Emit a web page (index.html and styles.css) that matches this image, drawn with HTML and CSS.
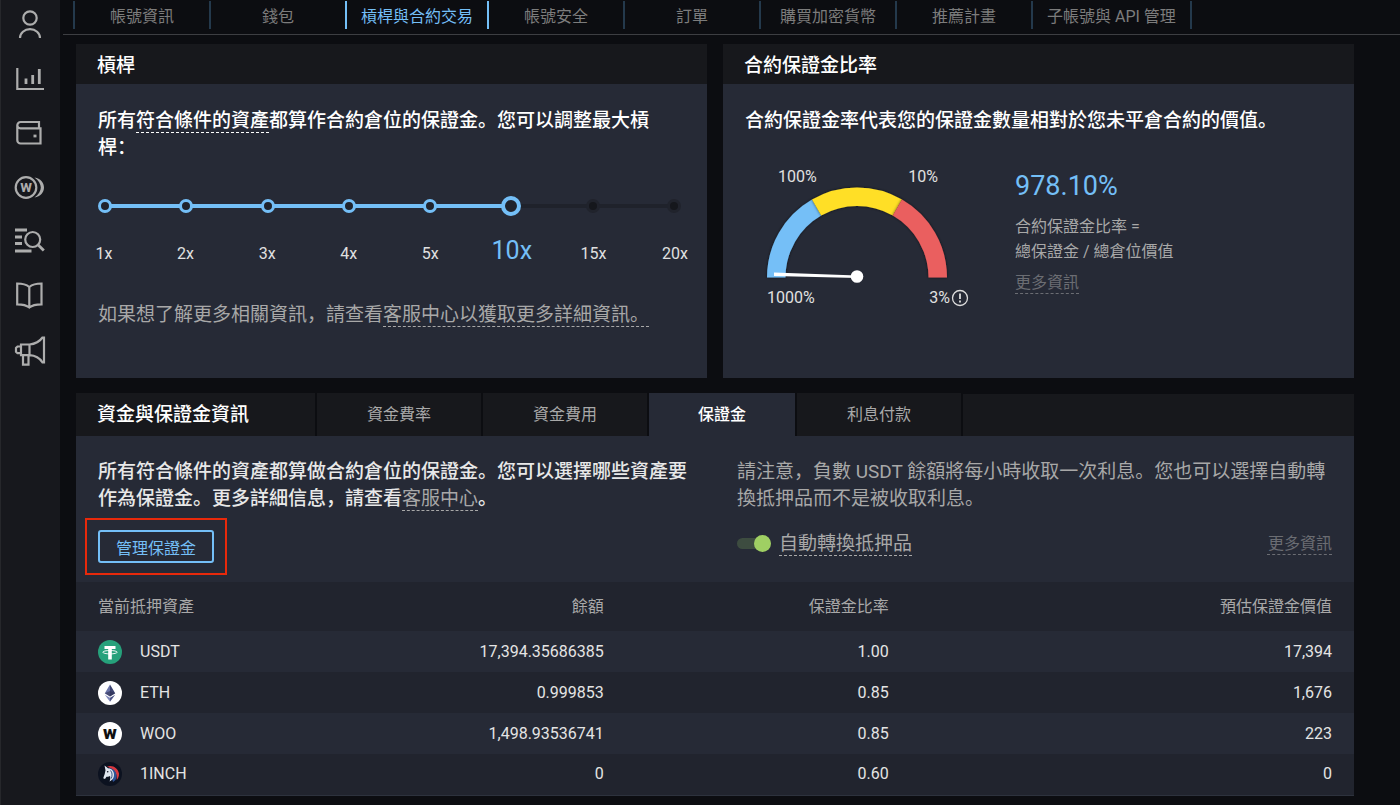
FILE: index.html
```html
<!DOCTYPE html>
<html lang="zh-CN">
<head>
    <meta charset="UTF-8">
    <meta name="viewport" content="width=device-width, initial-scale=1.0">
    <title>槓桿與合約交易</title>
    <link rel="stylesheet" href="styles.css">
</head>
<body>
    <div class="layout">
        <aside class="sidebar">
            <a href="#" aria-label="帳號">
                <svg viewBox="0 0 32 32"><circle cx="16" cy="9" r="6.7"/><path d="M6 29a9.8 8.6 0 0 1 20 0"/></svg>
            </a>
            <a href="#" aria-label="交易">
                <svg viewBox="0 0 32 32"><path d="M3.3 5v21H30"/><path class="thick" d="M12 15.500v5.500M18.700 12v9M25.300 6v15"/></svg>
            </a>
            <a href="#" aria-label="錢包">
                <svg viewBox="0 0 32 32"><path d="M3.300 8.300a3.300 3.300 0 0 1 3.300-3.300H25v6M3.300 8.300a3.200 3.200 0 0 0 3.300 3H26.500V26.500H6.600a3.300 3.300 0 0 1-3.300-3.300z"/><path class="thick" d="M19.500 19h3"/></svg>
            </a>
            <a href="#" aria-label="質押">
                <svg viewBox="0 0 32 32"><circle cx="12" cy="16.500" r="10.300"/><path d="M20.500 6.500C26.500 7.500 30 11.500 30 16.500s-3.500 9-9.500 10C24.500 23.500 26.800 20 26.800 16.500s-2.300-7-6.300-10z" class="moon"/><text x="12" y="21" text-anchor="middle">w</text></svg>
            </a>
            <a href="#" aria-label="紀錄">
                <svg viewBox="0 0 32 32"><path class="thick" d="M1 5h12M1 12h7M1 18.500h7M1 26h16.500"/><circle cx="18.700" cy="14.500" r="7.500"/><path class="thick" d="M24.200 20l5.600 5.600"/></svg>
            </a>
            <a href="#" aria-label="說明">
                <svg viewBox="0 0 32 32"><path d="M15.300 8C12 5.200 8 4.500 3.200 4.500V25.300c4.800 0 8.800.4 12.100 3.200 3.300-2.800 7.300-3.200 12.200-3.200V4.500C22.600 4.500 18.600 5.200 15.300 8zv20"/></svg>
            </a>
            <a href="#" aria-label="公告">
                <svg viewBox="0 0 32 32"><path d="M15.500 11.500C21 11 26 8 28.500 4.500H30v25h-1.500C26 25.500 21 22.500 15.500 22.200zM7 11.500h8.500v10.700H7zM7 13.500H3.500L2 15v3.700l1.500 1.500H7M9 22.200v9.500h5.500v-9.500"/></svg>
            </a>
        </aside>

        <main class="main">
            <nav class="top-nav">
                <a href="#">帳號資訊</a>
                <a href="#">錢包</a>
                <a href="#" class="active">槓桿與合約交易</a>
                <a href="#">帳號安全</a>
                <a href="#">訂單</a>
                <a href="#">購買加密貨幣</a>
                <a href="#">推薦計畫</a>
                <a href="#">子帳號與 API 管理</a>
            </nav>

            <div class="content">
                <div class="cards">
                    <section class="card">
                        <h2 class="card-title">槓桿</h2>
                        <div class="card-body">
                            <p class="lead">所有<a href="#">符合條件的資產</a>都算作合約倉位的保證金。您可以調整最大槓桿：</p>

                            <div class="leverage">
                                <div class="slider">
                                    <div class="track"><div class="track-fill"></div></div>
                                    <div class="stops">
                                        <span class="on"></span><span class="on"></span><span class="on"></span><span class="on"></span><span class="on"></span><span></span><span></span><span></span>
                                    </div>
                                    <input type="range" min="0" max="7" value="5" aria-label="槓桿">
                                </div>
                                <div class="slider-labels">
                                    <span>1x</span><span>2x</span><span>3x</span><span>4x</span><span>5x</span><span class="current">10x</span><span>15x</span><span>20x</span>
                                </div>
                            </div>

                            <p class="lead muted">如果想了解更多相關資訊，請查看<a href="#">客服中心以獲取更多詳細資訊。</a></p>
                        </div>
                    </section>

                    <section class="card">
                        <h2 class="card-title">合約保證金比率</h2>
                        <div class="card-body">
                            <p class="lead">合約保證金率代表您的保證金數量相對於您未平倉合約的價值。</p>

                            <div class="ratio">
                                <div class="gauge">
                                    <div class="gauge-top"><span>100%</span><span>10%</span></div>
                                    <svg viewBox="0 0 180 98">
                                        <defs>
                                            <filter id="soft" x="-20%" y="-20%" width="140%" height="140%">
                                                <feDropShadow dx="0" dy="0" stdDeviation="1.500" flood-color="#000" flood-opacity="0.6"/>
                                            </filter>
                                        </defs>
                                        <path filter="url(#soft)" fill="#74bff7" d="M0 90.500A90 90 0 0 1 45 12.560L54.250 28.580A71.500 71.500 0 0 0 18.500 90.500z"/>
                                        <path filter="url(#soft)" fill="#ffdf26" d="M45 12.560A90 90 0 0 1 135 12.560L125.750 28.580A71.500 71.500 0 0 0 54.250 28.580z"/>
                                        <path filter="url(#soft)" fill="#ea5e5e" d="M135 12.560A90 90 0 0 1 180 90.500H161.500A71.500 71.500 0 0 0 125.750 28.580z"/>
                                        <path fill="#fff" d="M7 85.500v3.500L90 91v-2.500z"/>
                                        <circle cx="90" cy="89.500" r="6.300" fill="#fff"/>
                                    </svg>
                                    <div class="gauge-bottom">
                                        <span>1000%</span>
                                        <span class="danger">3%
                                            <svg viewBox="0 0 18 18"><circle cx="9" cy="9" r="7.500" fill="none" stroke="#ddd" stroke-width="1.300"/><path d="M9 4.500v5.500M9 11.500v2" stroke="#ddd" stroke-width="1.800"/></svg>
                                        </span>
                                    </div>
                                </div>
                                <div class="ratio-info">
                                    <strong>978.10%</strong>
                                    <p>合約保證金比率 =<br>總保證金 / 總倉位價值</p>
                                    <a href="#" class="more">更多資訊</a>
                                </div>
                            </div>
                        </div>
                    </section>
                </div>

                <section class="panel">
                    <div class="tabs">
                        <h2>資金與保證金資訊</h2>
                        <button type="button">資金費率</button>
                        <button type="button">資金費用</button>
                        <button type="button" class="active">保證金</button>
                        <button type="button">利息付款</button>
                        <div class="tabs-rest"></div>
                    </div>

                    <div class="panel-body">
                        <div>
                            <p class="lead soft">所有符合條件的資產都算做合約倉位的保證金。您可以選擇哪些資產要作為保證金。更多詳細信息，請查看<a href="#" class="muted">客服中心</a>。</p>
                            <div class="highlight">
                                <button type="button" class="manage-btn">管理保證金</button>
                            </div>
                        </div>
                        <div>
                            <p class="lead muted">請注意，負數 USDT 餘額將每小時收取一次利息。您也可以選擇自動轉換抵押品而不是被收取利息。</p>
                            <div class="convert">
                                <input type="checkbox" id="auto-convert" class="toggle" checked>
                                <label for="auto-convert">自動轉換抵押品</label>
                                <a href="#" class="more">更多資訊</a>
                            </div>
                        </div>
                    </div>

                    <table class="assets">
                        <colgroup><col class="col-asset"><col class="col-balance"><col class="col-ratio"><col></colgroup>
                        <thead>
                            <tr><th>當前抵押資產</th><th>餘額</th><th>保證金比率</th><th>預估保證金價值</th></tr>
                        </thead>
                        <tbody>
                            <tr>
                                <td><div class="asset">
                                    <svg viewBox="0 0 24 24"><circle cx="12" cy="12" r="12" fill="#26a17b"/><path fill="#fff" d="M6.500 6h11v3h-3.700v10.500h-3.600V9H6.500z"/><ellipse cx="12" cy="12.200" rx="7.200" ry="1.700" fill="none" stroke="#fff" stroke-width=".9"/></svg>
                                    USDT</div></td>
                                <td>17,394.35686385</td><td>1.00</td><td>17,394</td>
                            </tr>
                            <tr>
                                <td><div class="asset">
                                    <svg viewBox="0 0 24 24"><circle cx="12" cy="12" r="12" fill="#fff"/><path fill="#6b74a8" d="M12 3.500L6.800 12.300 12 15.400z"/><path fill="#3c4370" d="M12 3.500l5.200 8.800-5.200 3.100z"/><path fill="#2d3154" d="M12 10l5.200 2.300-5.200 3.100-5.200-3.100z" opacity=".6"/><path fill="#8189bb" d="M6.800 13.700L12 16.800v4z"/><path fill="#4b5387" d="M17.200 13.700L12 16.800v4z"/></svg>
                                    ETH</div></td>
                                <td>0.999853</td><td>0.85</td><td>1,676</td>
                            </tr>
                            <tr>
                                <td><div class="asset">
                                    <svg viewBox="0 0 24 24"><circle cx="12" cy="12" r="12" fill="#fff"/><text x="12" y="17" text-anchor="middle" class="woo-mark">w</text></svg>
                                    WOO</div></td>
                                <td>1,498.93536741</td><td>0.85</td><td>223</td>
                            </tr>
                            <tr>
                                <td><div class="asset">
                                    <svg viewBox="0 0 24 24"><circle cx="12" cy="12" r="12" fill="#0c1220"/><path fill="#d8373f" d="M9 4.500c6-2 11 2 12 7 .2 3-1 5-2.300 6.500.4-4-.5-8-4-10.500-1.500-1.200-3.500-2-5.700-3z"/><path fill="#2d5296" d="M11 6c5 .5 8 4 7.500 9-.2 2-1.500 4-3.500 5z"/><path fill="#dfe6ef" d="M6.500 3.500L10 6.200c4 .3 6 3.300 6 6.800 0 3-1.500 5-4.500 6.500 1-2 1-3.800.5-5.500-1.500.7-2.700.8-3.500.8L7 17l-1.800-.8L6.700 12l.8-3.700z"/><path stroke="#24427a" d="M12.500 8.500c1.800 2 2 5 .8 8" fill="none" stroke-width=".9"/><circle cx="9.700" cy="9.800" r=".8" fill="#0c1220"/></svg>
                                    1INCH</div></td>
                                <td>0</td><td>0.60</td><td>0</td>
                            </tr>
                        </tbody>
                    </table>
                </section>
            </div>
        </main>
    </div>
</body>
</html>
```

FILE: styles.css
```css
* {
    box-sizing: border-box;
}

body {
    margin: 0;
    background-color: #0c0d11;
    color: #fff;
    font-family: Roboto, "Noto Sans CJK SC", sans-serif;
    font-size: 16px;
    line-height: 20px;
}

h2,
p {
    margin: 0;
}

a {
    color: inherit;
    text-decoration: none;
}

button {
    font-family: inherit;
    font-size: 16px;
    cursor: pointer;
}

.layout {
    display: flex;
    min-height: 100vh;
}

/* Sidebar */
.sidebar {
    width: 60px;
    flex-shrink: 0;
    display: flex;
    flex-direction: column;
    align-items: center;
    gap: 22px;
    padding-top: 9px;
    background-color: #17181d;
    box-shadow: inset 1px 0 #26272b;
}

.sidebar a,
.sidebar svg {
    display: block;
    width: 32px;
    height: 32px;
}

.sidebar svg {
    fill: none;
    stroke: #adadad;
    stroke-width: 2.2;
    overflow: visible;
}

.sidebar .thick {
    stroke-width: 2.8;
}

.sidebar .moon {
    fill: #adadad;
    stroke: none;
}

.sidebar text {
    fill: #adadad;
    stroke: none;
    font-size: 16px;
    font-weight: 700;
}

.main {
    flex: 1;
    min-width: 0;
}

/* Top navigation */
.top-nav {
    display: flex;
    margin-left: 3px;
    padding: 1px 0 5px 10px;
    border-bottom: 1px solid #3d3e42;
}

.top-nav a {
    display: flex;
    align-items: center;
    justify-content: center;
    min-width: 136px;
    height: 28px;
    padding: 3px 14px 0;
    border-left: 2px solid #24394c;
    color: #7c7c7c;
}

.top-nav a:last-child {
    border-right: 2px solid #24394c;
}

.top-nav .active {
    border-color: #74bff7;
    color: #74bff7;
}

.top-nav .active + a {
    border-color: #74bff7;
}

.content {
    padding: 9px 46px 9px 16px;
}

/* Cards */
.cards {
    display: grid;
    grid-template-columns: 1fr 1fr;
    gap: 16px;
    margin-bottom: 15px;
}

.card {
    background-color: #262a36;
}

.card-title,
.tabs h2 {
    font-size: 19px;
    font-weight: 500;
}

.card-title {
    padding: 3px 21px 0;
    line-height: 37px;
    background-color: #17181c;
}

.card-body {
    padding: 23px 22px 50px;
}

.lead {
    font-size: 19px;
    font-weight: 500;
    line-height: 27px;
}

.lead a,
.more,
.convert label {
    text-decoration: underline dashed 1px;
    text-underline-offset: 5px;
    text-decoration-skip-ink: none;
}

.soft {
    color: #e8e8e8;
}

.muted {
    font-weight: 400;
    color: #a8a8a8;
}

.more {
    color: #6b6d73;
}

/* Leverage slider */
.leverage {
    margin: 35px 1px 29px -3px;
}

.slider {
    display: grid;
    align-items: center;
}

.slider > * {
    grid-area: 1 / 1;
}

.track {
    height: 4px;
    margin: 0 10px;
    background-color: #1f222b;
}

.track-fill {
    width: 71.4%;
    height: 4px;
    background-color: #74bff7;
}

.stops {
    display: flex;
    justify-content: space-between;
    padding: 0 3px;
}

.stops span {
    width: 14px;
    height: 14px;
    border: 3px solid #20232c;
    border-radius: 50%;
    background-color: #15171c;
}

.stops .on {
    border-color: #74bff7;
    background-color: #20232c;
}

.slider input {
    appearance: none;
    width: 100%;
    height: 20px;
    margin: 0;
    background: transparent;
    cursor: pointer;
}

.slider input::-webkit-slider-thumb {
    appearance: none;
    width: 20px;
    height: 20px;
    border: 4px solid #74bff7;
    border-radius: 50%;
    background-color: #20232c;
}

.slider-labels {
    display: flex;
    justify-content: space-between;
    align-items: baseline;
    margin-top: 17px;
    line-height: 36px;
    color: #e0e0e0;
}

.slider-labels span {
    display: flex;
    justify-content: center;
    width: 18px;
}

.slider-labels .current {
    font-size: 25px;
    color: #74bff7;
}

/* Margin ratio */
.ratio {
    display: flex;
    gap: 46px;
    padding: 33px 0 0 22px;
}

.gauge {
    width: 202px;
    color: #e0e0e0;
}

.gauge > svg {
    display: block;
    width: 180px;
    overflow: visible;
}

.gauge-top,
.gauge-bottom {
    display: flex;
    justify-content: space-between;
}

.gauge-top {
    padding: 0 31px 0 11px;
}

.gauge-bottom {
    margin-top: 3px;
}

.danger {
    display: flex;
    align-items: center;
    gap: 1px;
}

.danger svg {
    width: 18px;
    height: 18px;
}

.ratio-info {
    color: #a8a8a8;
    line-height: 25px;
}

.ratio-info strong {
    display: block;
    margin-bottom: 8px;
    font-size: 27px;
    font-weight: 400;
    line-height: 39px;
    color: #74bff7;
}

.ratio-info .more {
    display: inline-block;
    margin-top: 6px;
}

/* Funding and margin panel */
.tabs {
    display: flex;
    gap: 2px;
    height: 43px;
    background-color: #0c0d11;
}

.tabs h2,
.tabs button {
    line-height: 43px;
    background-color: #17181c;
}

.tabs h2 {
    width: 239px;
    padding-left: 21px;
}

.tabs button {
    border: none;
    padding: 0 50px;
    color: #a8a8a8;
}

.tabs .active {
    padding: 0 49px;
    background-color: #262a36;
    color: #fff;
    font-weight: 500;
}

.tabs-rest {
    flex: 1;
    margin-top: 1px;
    background-color: #17181c;
}

.panel-body {
    display: grid;
    grid-template-columns: 1fr 1fr;
    gap: 44px;
    padding: 22px 22px 7px;
    background-color: #262a36;
}

/* Red frame around the button */
.highlight {
    width: fit-content;
    margin: 6px 0 0 -13px;
    padding: 10px 11px;
    border: 2px solid #e8290b;
}

.manage-btn {
    display: block;
    height: 33px;
    padding: 0 16px;
    border: 2px solid #74bff7;
    border-radius: 3px;
    background: transparent;
    color: #74bff7;
}

.convert {
    display: flex;
    align-items: center;
    gap: 8px;
    margin-top: 18px;
}

.convert label {
    font-size: 19px;
    line-height: 27px;
    color: #a8a8a8;
}

.convert .more {
    margin-left: auto;
}

.toggle {
    appearance: none;
    display: flex;
    align-items: center;
    width: 34px;
    height: 11px;
    margin: 0;
    border-radius: 6px;
    background-color: #3d4c40;
    cursor: pointer;
}

.toggle::before {
    content: "";
    width: 17px;
    height: 17px;
    border-radius: 50%;
    background-color: #777;
}

.toggle:checked::before {
    margin-left: auto;
    background-color: #9fcf63;
}

/* Collateral table */
.assets {
    width: 100%;
    table-layout: fixed;
    border-collapse: collapse;
    border-bottom: 1px solid #2d323d;
    color: #e4e4e4;
}

.col-asset {
    width: 19%;
}

.col-balance,
.col-ratio {
    width: 22.3%;
}

.assets th,
.assets td {
    height: 41px;
    padding: 0;
    text-align: right;
}

.assets th {
    height: 49px;
    font-weight: 400;
    color: #a8a8a8;
}

.assets th:first-child,
.assets td:first-child {
    padding-left: 22px;
    text-align: left;
}

.assets th:last-child,
.assets td:last-child {
    padding-right: 22px;
}

.assets thead tr,
.assets tbody tr:nth-child(even) {
    background-color: #21242e;
}

.assets tbody tr:nth-child(odd) {
    background-color: #262a36;
}

.asset {
    display: flex;
    align-items: center;
    gap: 18px;
}

.asset svg {
    width: 24px;
    height: 24px;
}

.woo-mark {
    font-size: 19px;
    font-weight: 900;
    fill: #111;
}
```
